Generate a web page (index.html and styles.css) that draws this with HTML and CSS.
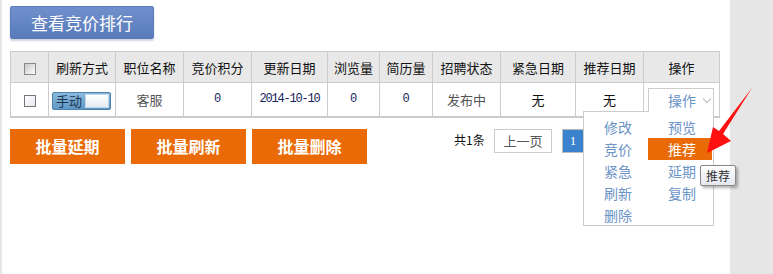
FILE: index.html
```html
<!DOCTYPE html>
<html lang="zh-CN">
<head>
  <meta charset="UTF-8">
  <title>竞价管理</title>
  <link rel="stylesheet" href="styles.css">
</head>
<body>
  <div class="page">
    <div class="main">
      <button class="rank-btn">查看竞价排行</button>

      <table class="job-table">
        <colgroup>
          <col style="width:38px"><col style="width:67px"><col style="width:68px"><col style="width:68px">
          <col style="width:76px"><col style="width:52px"><col style="width:53px"><col style="width:68px">
          <col style="width:75px"><col style="width:68px"><col style="width:76px">
        </colgroup>
        <thead>
          <tr>
            <th><span class="chk chk-head"></span></th>
            <th>刷新方式</th>
            <th>职位名称</th>
            <th>竞价积分</th>
            <th>更新日期</th>
            <th>浏览量</th>
            <th>简历量</th>
            <th>招聘状态</th>
            <th>紧急日期</th>
            <th>推荐日期</th>
            <th>操作</th>
          </tr>
        </thead>
        <tbody>
          <tr>
            <td><span class="chk"></span></td>
            <td class="left"><span class="switch"><span class="switch-label">手动</span><span class="switch-knob"></span></span></td>
            <td class="gray">客服</td>
            <td class="num">0</td>
            <td class="date">2014-10-10</td>
            <td class="num">0</td>
            <td class="num">0</td>
            <td class="gray">发布中</td>
            <td>无</td>
            <td>无</td>
            <td class="op-cell">
              <div class="op-drop">
                <div class="op-trigger">操作 <span class="caret"></span></div>
                <div class="op-menu">
                  <a>修改</a><a>预览</a>
                  <a>竞价</a><a class="active">推荐</a>
                  <a>紧急</a><a>延期</a>
                  <a>刷新</a><a>复制</a>
                  <a>删除</a>
                </div>
              </div>
            </td>
          </tr>
        </tbody>
      </table>

      <div class="bottom-bar">
        <div class="batch">
          <button class="batch-btn">批量延期</button>
          <button class="batch-btn">批量刷新</button>
          <button class="batch-btn">批量删除</button>
        </div>
        <div class="pager">
          <span class="total">共1条</span>
          <a class="pg">上一页</a>
          <a class="pg current">1</a>
        </div>
      </div>
    </div>
    <div class="side"></div>

    <div class="tip">推荐</div>
    <svg class="arrow" width="60" height="80" viewBox="700 80 60 80">
      <polygon points="707,153 713,127 719,131 752,88 723,134 731,141" fill="#ff1010"/>
    </svg>
  </div>
</body>
</html>
```

FILE: styles.css
```css
* {
  margin: 0;
  padding: 0;
  box-sizing: border-box;
}

body {
  font-family: "Noto Sans CJK SC", "Liberation Sans", sans-serif;
  font-size: 13px;
  color: #111;
  background: #fff;
}

.page {
  position: relative;
  display: flex;
  width: 773px;
  height: 274px;
  overflow: hidden;
}

.main {
  width: 730px;
  padding: 6px 0 0 8px;
  border-left: 2px solid #e6e6e6;
}

.side {
  flex: 1;
  background: #e6e6e6;
}

.rank-btn {
  width: 144px;
  height: 33px;
  border: 1px solid #5a7cba;
  border-radius: 2px;
  background: linear-gradient(#6f90cc, #5a7bbb);
  box-shadow: 0 2px 2px rgba(60, 80, 140, 0.25);
  color: #fff;
  font-family: inherit;
  font-size: 17px;
}

.job-table {
  margin-top: 12px;
  width: 710px;
  border-collapse: collapse;
  table-layout: fixed;
  border-bottom: 2px solid #ccc;
}

.job-table th,
.job-table td {
  border: 1px solid #ccc;
  text-align: center;
  vertical-align: middle;
  padding: 0;
}

.job-table th {
  height: 31px;
  background: #e8e8e8;
  font-weight: normal;
  font-size: 13px;
}

.job-table td {
  height: 34px;
  font-size: 13px;
}

.job-table td.left {
  text-align: left;
  padding-left: 3px;
}

.job-table td.gray {
  color: #555;
}

.job-table td.num {
  color: #14235a;
  font-family: "Liberation Mono", monospace;
  font-size: 12px;
}

.job-table td.date {
  color: #14235a;
  font-family: "Liberation Mono", monospace;
  font-size: 12px;
  letter-spacing: -1.2px;
}

.job-table td.op-cell {
  vertical-align: top;
  text-align: left;
  padding: 5px 0 0 4px;
}

.chk {
  display: inline-block;
  width: 12px;
  height: 12px;
  border: 1px solid #777;
  background: linear-gradient(135deg, #fff, #e4e8ee);
  vertical-align: middle;
}

.chk-head {
  border-color: #888;
  background: linear-gradient(135deg, #c8c8c8, #fff);
}

.switch {
  display: inline-flex;
  align-items: center;
  width: 59px;
  height: 18px;
  border: 1px solid #4d82ad;
  border-radius: 2px;
  background: linear-gradient(#8ab9dc, #5f98c6);
  vertical-align: middle;
  margin-top: 2px;
}

.switch-label {
  width: 32px;
  text-align: center;
  font-size: 13px;
  line-height: 16px;
  color: #1c3450;
}

.switch-knob {
  width: 24px;
  height: 14px;
  background: linear-gradient(#fff, #e3ebf2);
  border: 1px solid #c4d6e6;
}

.op-drop {
  position: relative;
  width: 66px;
}

.op-trigger {
  position: relative;
  z-index: 3;
  height: 24px;
  border: 1px solid #ccc;
  border-bottom: none;
  background: #fff;
  color: #6b93c6;
  font-size: 14px;
  line-height: 22px;
  padding-left: 19px;
}

.caret {
  display: inline-block;
  width: 6px;
  height: 6px;
  border-right: 1px solid #bbb;
  border-bottom: 1px solid #bbb;
  transform: rotate(45deg);
  margin-left: 5px;
  vertical-align: 4px;
}

.op-menu {
  position: absolute;
  z-index: 2;
  top: 23px;
  right: 0;
  width: 131px;
  height: 115px;
  border: 1px solid #ccc;
  background: #fff;
  padding-top: 4px;
  display: grid;
  grid-template-columns: 64px 64px;
  grid-auto-rows: 22px;
}

.op-menu a {
  display: block;
  height: 22px;
  overflow: hidden;
  color: #6b93c6;
  font-size: 14px;
  line-height: 22px;
  padding-left: 20px;
}

.op-menu a.active {
  background: #e96a06;
  color: #fff;
}

.bottom-bar {
  display: flex;
  align-items: flex-start;
  margin-top: 11px;
  width: 710px;
}

.batch {
  display: flex;
  gap: 6px;
}

.batch-btn {
  width: 115px;
  height: 35px;
  border: none;
  background: #e96a06;
  color: #fff;
  font-family: inherit;
  font-size: 16px;
  font-weight: bold;
}

.pager {
  margin-left: auto;
  margin-right: 136px;
  display: flex;
  align-items: center;
  gap: 10px;
}

.total {
  width: 30px;
  white-space: nowrap;
  font-size: 12px;
  margin-top: -2px;
}

.pg {
  height: 24px;
  width: 58px;
  border: 1px solid #ccc;
  text-align: center;
  line-height: 22px;
  color: #555;
  font-size: 13px;
}

.pg.current {
  width: 22px;
  background: #3a82cc;
  border-color: #bbb;
  color: #fff;
  font-family: "Liberation Serif", serif;
}

.tip {
  position: absolute;
  z-index: 5;
  left: 700px;
  top: 165px;
  width: 36px;
  height: 21px;
  border: 1px solid #888;
  border-radius: 2px;
  background: linear-gradient(#fff, #e4e6ee);
  box-shadow: 2px 2px 3px rgba(0, 0, 0, 0.3);
  font-size: 12px;
  line-height: 19px;
  text-align: center;
  color: #333;
}

.arrow {
  position: absolute;
  z-index: 5;
  left: 700px;
  top: 80px;
}
```
